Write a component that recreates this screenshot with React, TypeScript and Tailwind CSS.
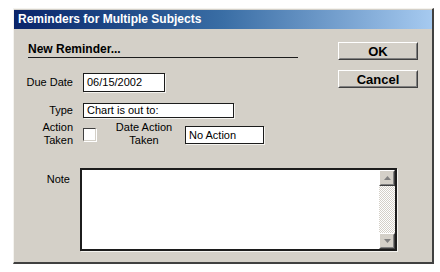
import React from 'react';

function Raised({ children, className }: { children?: React.ReactNode; className?: string }) {
  return (
    <div className={`border border-t-[#ffffff] border-l-[#ffffff] border-r-[#404040] border-b-[#404040] bg-[#d4d0c8] ${className ?? ''}`}>
      <div className="w-full h-full border border-t-[#d4d0c8] border-l-[#d4d0c8] border-r-[#808080] border-b-[#808080] flex items-center justify-center">
        {children}
      </div>
    </div>
  );
}

function Field({ value, className }: { value: string; className?: string }) {
  return (
    <div className={`bg-white border border-[#1c1c1c] shadow-[1px_1px_0_#f4f3ef] flex items-center pl-[3px] text-[11px] text-black ${className ?? ''}`}>
      {value}
    </div>
  );
}

export default function App() {
  return (
    <div className="w-[440px] h-[272px] bg-white pt-[8px] pl-[13px] font-['Liberation_Sans',Arial,sans-serif] text-black">
      <div className="w-[421px] h-[256px] bg-[#d4d0c8] border-l border-t border-l-[#f4f3ef] border-t-[#f4f3ef] border-r-2 border-b-2 border-r-[#404040] border-b-[#404040] flex flex-col">
        <div className="h-[19px] mt-[1px] bg-linear-to-r from-[#0a246a] via-[#3a6ea5] to-[#a6caf0] pl-[4px] text-white font-bold text-[12px] leading-[19px]">
          Reminders for Multiple Subjects
        </div>

        <div className="flex">
          <div className="flex flex-col">
            <div className="ml-[14px] mt-[13px] w-[270px] border-b border-[#1c1c1c] pb-[1px] text-[12px] leading-[14px] font-bold">
              New Reminder...
            </div>

            <div className="flex items-center mt-[15px] h-[19px]">
              <div className="w-[59px] text-right text-[11px]">Due Date</div>
              <Field value="06/15/2002" className="ml-[10px] w-[82px] h-[19px]" />
            </div>

            <div className="flex items-center mt-[11px] h-[15px]">
              <div className="w-[59px] text-right text-[11px]">Type</div>
              <Field value="Chart is out to:" className="ml-[10px] w-[151px] h-[15px]" />
            </div>

            <div className="flex items-start mt-[3px] h-[26px]">
              <div className="w-[59px] text-right text-[11px] leading-[13px]">
                Action
                <br />
                Taken
              </div>
              <div className="ml-[10px] mt-[7px] w-[13px] h-[13px] bg-white border border-t-[#404040] border-l-[#404040] border-r-[#d4d0c8] border-b-[#d4d0c8] shadow-[1px_1px_0_#fff]" />
              <div className="ml-[18px] w-[60px] text-center text-[11px] leading-[13px]">
                Date Action
                <br />
                Taken
              </div>
              <Field value="No Action" className="ml-[11px] mt-[5px] w-[79px] h-[18px]" />
            </div>
          </div>

          <div className="ml-auto mr-[14px] mt-[13px] flex flex-col">
            <Raised className="w-[80px] h-[18px]">
              <span className="text-[13px] font-bold leading-none">OK</span>
            </Raised>
            <Raised className="w-[80px] h-[18px] mt-[10px]">
              <span className="text-[13px] font-bold leading-none">Cancel</span>
            </Raised>
          </div>
        </div>

        <div className="flex items-start mt-[21px]">
          <div className="w-[56px] mt-[3px] text-right text-[11px]">Note</div>
          <div className="ml-[10px] w-[317px] h-[83px] bg-white border-2 border-[#1c1c1c] shadow-[1px_1px_0_#f4f3ef] flex justify-end">
            <div className="w-[16px] h-full flex flex-col bg-[repeating-conic-gradient(#d4d0c8_0_25%,#ffffff_0_50%)] bg-[length:2px_2px]">
              <Raised className="w-[16px] h-[16px]">
                <svg width="7" height="4" viewBox="0 0 7 4">
                  <path d="M3.5 0 L7 4 L0 4 Z" fill="#808080" />
                </svg>
              </Raised>
              <div className="flex-1" />
              <Raised className="w-[16px] h-[16px]">
                <svg width="7" height="4" viewBox="0 0 7 4">
                  <path d="M0 0 L7 0 L3.5 4 Z" fill="#808080" />
                </svg>
              </Raised>
            </div>
          </div>
        </div>
      </div>
    </div>
  );
}
